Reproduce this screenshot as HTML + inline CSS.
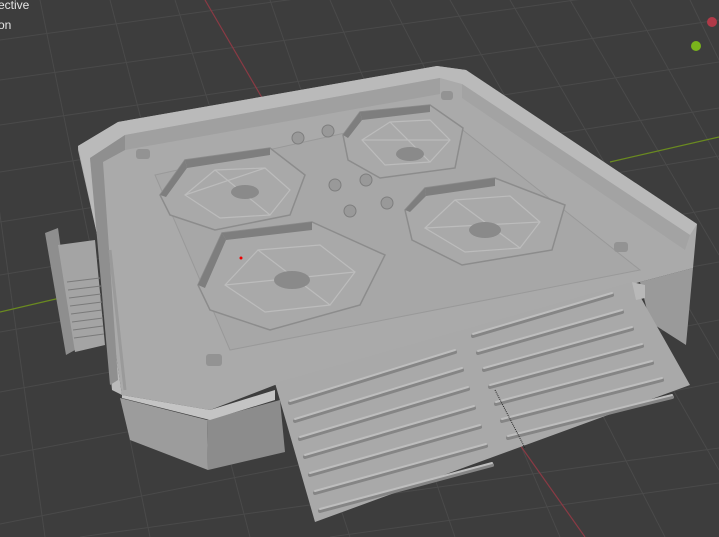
<!DOCTYPE html>
<html><head><style>
html,body{margin:0;padding:0;background:#3d3d3d;width:719px;height:537px;overflow:hidden}
svg{display:block}
.t{font-family:"Liberation Sans",sans-serif;font-size:12px;fill:#e6e6e6}
</style></head><body>
<svg width="719" height="537" viewBox="0 0 719 537" xmlns="http://www.w3.org/2000/svg">
<rect width="719" height="537" fill="#3d3d3d"/>
<g stroke="#4a4a4a" stroke-width="1" fill="none">
<path d="M0 40 L719 -60 M0 80 L719 -20 M0 125 L719 20 M0 172 L719 62 M0 222 L719 108 M0 275 L719 156 M0 332 L719 208 M0 392 L719 262 M0 456 L719 320 M0 524 L719 382 M80 537 L719 448 M330 537 L719 483"/>
<path d="M40 0 L150 537 M110 0 L250 537 M175 0 L350 537 M270 0 L455 537 M330 0 L560 537 M390 0 L665 537 M450 0 L719 470 M510 0 L719 360 M570 0 L719 255 M630 0 L719 160 M690 0 L719 60 M-30 0 L45 537"/>
</g>
<line x1="205" y1="0" x2="275" y2="120" stroke="#8a3a44" stroke-width="1.2"/>
<line x1="520" y1="445" x2="585" y2="537" stroke="#8a3a44" stroke-width="1.2"/>
<line x1="0" y1="312" x2="60" y2="298" stroke="#6a8a20" stroke-width="1.2"/>
<line x1="610" y1="162" x2="719" y2="137" stroke="#6a8a20" stroke-width="1.2"/>
<text class="t" x="-2" y="9">ective</text>
<text class="t" x="-2" y="29">on</text>
<circle cx="712" cy="22" r="5" fill="#b03a48"/>
<circle cx="696" cy="46" r="5" fill="#7ab41c"/>

<polygon points="45,233 58,228 75,350 66,355" fill="#8e8e8e"/>
<polygon points="58,245 95,240 105,345 75,352" fill="#a4a4a4"/>
<g stroke="#7a7a7a" stroke-width="1">
<path d="M67 282 L100 278 M68 290 L101 286 M69 298 L101 294 M70 306 L102 302 M71 314 L102 310 M72 322 L103 318 M73 330 L103 326 M74 338 L104 334"/>
</g>
<polygon points="120,398 207,420 208,470 130,440" fill="#9c9c9c"/>
<polygon points="207,420 280,400 285,452 208,470" fill="#8c8c8c"/>
<polygon points="640,282 693,268 686,345 650,322" fill="#9a9a9a"/>
<polygon points="78,146 118,122 437,66 466,70 697,224 693,268 640,282 275,385 210,410 122,395 100,248 78,150" fill="#aaaaaa"/>
<polygon points="78,146 118,122 437,66 466,70 697,224 690,235 462,84 440,78 125,135 90,158 112,390 122,395 100,248" fill="#bababa"/>
<polygon points="90,158 125,135 125,150 103,162 118,380 110,385" fill="#8f8f8f"/>
<polygon points="125,135 440,78 440,94 125,150" fill="#a0a0a0"/>
<polygon points="462,84 690,235 685,250 462,98" fill="#a3a3a3"/>
<polygon points="122,395 210,410 275,390 275,400 210,420 122,398" fill="#c4c4c4"/>
<line x1="110" y1="250" x2="125" y2="390" stroke="#9a9a9a" stroke-width="3"/>
<polygon points="155,175 440,112 640,270 230,350" fill="#a7a7a7" stroke="#999" stroke-width="1"/>
<g fill="#a9a9a9" stroke="#8c8c8c" stroke-width="1.5">
<polygon points="160,195 185,160 270,148 305,175 290,215 215,230 170,215"/>
<polygon points="343,135 360,112 430,105 463,128 455,168 380,178 348,160"/>
<polygon points="405,210 425,188 495,178 565,205 552,250 462,265 412,240"/>
<polygon points="198,285 222,233 312,222 385,255 360,305 270,330 210,310"/>
</g>
<g fill="#7e7e7e">
<polygon points="160,195 185,160 187,168 166,197"/>
<polygon points="185,160 270,148 270,155 187,168"/>
<polygon points="343,135 360,112 362,120 348,138"/>
<polygon points="360,112 430,105 430,112 362,120"/>
<polygon points="405,210 425,188 426,196 410,212"/>
<polygon points="425,188 495,178 495,186 426,196"/>
<polygon points="198,285 222,233 226,240 205,288"/>
<polygon points="222,233 312,222 312,230 226,240"/>
</g>
<g fill="none" stroke="#bcbcbc" stroke-width="1.2">
<polygon points="185,195 215,170 265,168 290,190 270,215 220,218"/>
<polygon points="362,140 390,122 430,120 450,140 430,162 385,165"/>
<polygon points="425,228 455,200 510,196 540,222 520,248 465,252"/>
<polygon points="225,285 258,250 320,245 355,272 330,305 265,312"/>
<path d="M185 195 L265 168 M215 170 L270 215 M362 140 L450 140 M390 122 L430 162 M425 228 L540 222 M455 200 L520 248 M225 285 L355 272 M258 250 L330 305"/>
</g>
<g fill="#8a8a8a">
<ellipse cx="245" cy="192" rx="14" ry="7"/>
<ellipse cx="410" cy="154" rx="14" ry="7"/>
<ellipse cx="485" cy="230" rx="16" ry="8"/>
<ellipse cx="292" cy="280" rx="18" ry="9"/>
</g>
<g fill="#999" stroke="#7e7e7e" stroke-width="1">
<circle cx="298" cy="138" r="6"/><circle cx="328" cy="131" r="6"/>
<circle cx="335" cy="185" r="6"/><circle cx="366" cy="180" r="6"/>
<circle cx="350" cy="211" r="6"/><circle cx="387" cy="203" r="6"/>
</g>
<g fill="#939393">
<rect x="136" y="149" width="14" height="10" rx="3"/>
<rect x="441" y="91" width="12" height="9" rx="3"/>
<rect x="614" y="242" width="14" height="10" rx="3"/>
<rect x="206" y="354" width="16" height="12" rx="3"/>
</g>
<circle cx="241" cy="258" r="1.5" fill="#e00"/>
<polygon points="275,383 632,282 690,385 315,522" fill="#a9a9a9"/>
<polygon points="632,282 645,285 645,298 636,300" fill="#b8b8b8"/>
<g stroke="#858585" stroke-width="4" stroke-linecap="round">
<path d="M290 403 L455 352 M295 421 L462 370 M300 439 L468 389 M305 457 L474 408 M310 475 L480 427 M315 493 L486 446 M320 511 L492 465"/>
<path d="M473 336 L612 295 M478 353 L622 312 M484 370 L632 329 M490 387 L642 346 M496 404 L652 363 M502 421 L662 380 M508 438 L672 397"/>
</g>
<g stroke="#bebebe" stroke-width="2" stroke-linecap="round">
<path d="M290 401 L455 350 M295 419 L462 368 M300 437 L468 387 M305 455 L474 406 M310 473 L480 425 M315 491 L486 444 M320 509 L492 463"/>
<path d="M473 334 L612 293 M478 351 L622 310 M484 368 L632 327 M490 385 L642 344 M496 402 L652 361 M502 419 L662 378 M508 436 L672 395"/>
</g>
<line x1="495" y1="390" x2="525" y2="448" stroke="#222" stroke-width="1" stroke-dasharray="1,1"/>
</svg>
</body></html>
